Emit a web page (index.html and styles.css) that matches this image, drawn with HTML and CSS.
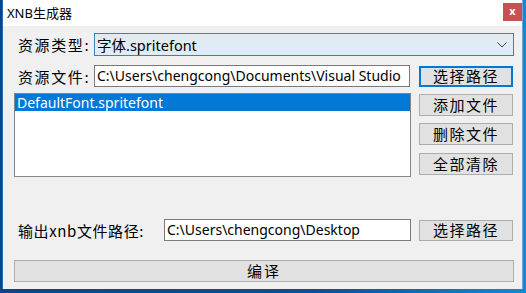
FILE: index.html
```html
<!DOCTYPE html>
<html lang="zh-CN">
<head>
  <meta charset="UTF-8">
  <title>XNB生成器</title>
  <link rel="stylesheet" href="styles.css">
</head>
<body>
  <div class="window">
    <div class="titlebar">
      <span class="title">XNB生成器</span>
      <span class="close">x</span>
    </div>

    <div class="content">
      <div class="row row-type">
        <span class="label">资源类型:</span>
        <div class="combo">
          <span class="combo-text">字体.spritefont</span>
          <svg class="chevron" viewBox="0 0 10 6" fill="none" stroke="#444" stroke-width="1">
            <polyline points="0.5 0.5 5 5 9.5 0.5"></polyline>
          </svg>
        </div>
      </div>

      <div class="row row-file">
        <span class="label">资源文件:</span>
        <div class="textbox file-path">C:\Users\chengcong\Documents\Visual Studio</div>
        <button class="button default">选择路径</button>
      </div>

      <div class="row row-list">
        <div class="listbox">
          <div class="list-item selected">DefaultFont.spritefont</div>
        </div>
        <div class="side-buttons">
          <button class="button">添加文件</button>
          <button class="button">删除文件</button>
          <button class="button">全部清除</button>
        </div>
      </div>

      <div class="row row-output">
        <span class="label out-label">输出xnb文件路径:</span>
        <div class="textbox out-path">C:\Users\chengcong\Desktop</div>
        <button class="button">选择路径</button>
      </div>

      <button class="button compile">编译</button>
    </div>
  </div>
</body>
</html>
```

FILE: styles.css
```css
:root {
  --face: #f0f0f0;
  --btn: #e1e1e1;
  --btn-border: #adadad;
  --box-border: #7a7a7a;
  --accent: #0078d7;
  --text: #000000;
  --font: "Noto Sans", "Noto Sans CJK SC", sans-serif;
  --font-cjk: "Noto Sans CJK SC", sans-serif;
}

* {
  box-sizing: border-box;
  margin: 0;
  padding: 0;
}

body {
  width: 526px;
  height: 293px;
  overflow: hidden;
  background: linear-gradient(90deg, #0a4686 0%, #0d4f92 60%, #1a86cf 100%);
  font-family: var(--font);
  color: var(--text);
}

.window {
  margin-left: 2px;
  width: 521px;
  height: 289px;
  background-color: var(--face);
  border-left: 1px solid #2e6cae;
  border-right: 1px solid #6fa6d8;
  display: flex;
  flex-direction: column;
}

.titlebar {
  height: 26px;
  background-color: #ffffff;
  display: flex;
  align-items: flex-start;
  justify-content: space-between;
}

.title {
  font-size: 13px;
  line-height: 26px;
  padding-left: 4px;
}

.close {
  margin-top: 3px;
  width: 19px;
  height: 18px;
  background-color: #c75050;
  color: #ffffff;
  font-size: 11px;
  font-weight: 700;
  line-height: 16px;
  text-align: center;
}

.content {
  padding: 7px 7px 0 11px;
  display: flex;
  flex-direction: column;
}

.row {
  display: flex;
  align-items: center;
}

.label {
  font-family: var(--font-cjk);
  font-size: 15px;
  letter-spacing: 1.6px;
  width: 80px;
  padding-left: 4px;
  flex-shrink: 0;
}

.combo {
  width: 420px;
  height: 23px;
  border: 1px solid #3c7fc1;
  background-color: #e1ebf5;
  display: flex;
  align-items: center;
  justify-content: space-between;
  padding: 0 6px 0 2px;
}

.combo-text,
.textbox,
.list-item {
  font-size: 14px;
  white-space: nowrap;
}

.combo-text {
  font-size: 14.5px;
}

.textbox {
  overflow: hidden;
}

.chevron {
  width: 10px;
  height: 6px;
}

.row-file {
  margin-top: 9px;
}

.textbox {
  height: 22px;
  border: 1px solid var(--box-border);
  background-color: #ffffff;
  padding-left: 2px;
  line-height: 20px;
}

.file-path {
  width: 316px;
}

.button {
  width: 94px;
  height: 22px;
  background-color: var(--btn);
  border: 1px solid var(--btn-border);
  font-family: var(--font-cjk);
  font-size: 15px;
  letter-spacing: 1.5px;
  line-height: 18px;
  color: var(--text);
  flex-shrink: 0;
}

.row-file .button {
  margin-left: 9px;
  height: 21px;
}

.button.default {
  border-color: var(--accent);
  box-shadow: inset 0 0 0 1px var(--accent);
}

.row-list {
  margin-top: 6px;
  align-items: flex-start;
}

.listbox {
  width: 397px;
  height: 84px;
  border: 1px solid #828790;
  background-color: #ffffff;
}

.list-item {
  height: 17px;
  line-height: 17px;
  padding-left: 2px;
}

.list-item.selected {
  background-color: var(--accent);
  color: #ffffff;
}

.side-buttons {
  margin-left: 8px;
  margin-top: 1px;
  display: flex;
  flex-direction: column;
  gap: 7px;
}

.side-buttons .button:last-child {
  margin-top: 1px;
}

.row-output {
  margin-top: 42px;
}

.out-label {
  width: 150px;
  letter-spacing: 0.6px;
}

.out-path {
  width: 247px;
}

.row-output .button {
  margin-left: 8px;
  height: 21px;
}

.compile {
  margin-top: 19px;
  width: 500px;
  letter-spacing: 2px;
}
```
